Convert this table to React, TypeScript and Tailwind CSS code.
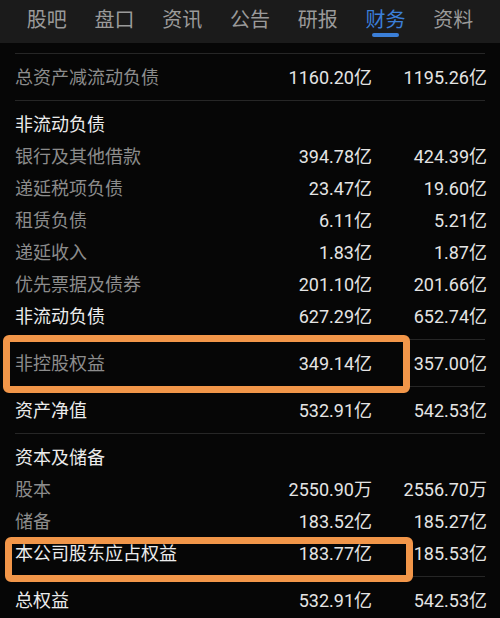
// Stock finance tab — balance sheet excerpt with two highlighted rows.
const tabs = ['股吧', '盘口', '资讯', '公告', '研报', '财务', '资料'];

type Row = { label: string; a?: string; b?: string; strong?: boolean };

const sections: Row[][] = [
  [{ label: '总资产减流动负债', a: '1160.20亿', b: '1195.26亿' }],
  [
    { label: '非流动负债', strong: true },
    { label: '银行及其他借款', a: '394.78亿', b: '424.39亿' },
    { label: '递延税项负债', a: '23.47亿', b: '19.60亿' },
    { label: '租赁负债', a: '6.11亿', b: '5.21亿' },
    { label: '递延收入', a: '1.83亿', b: '1.87亿' },
    { label: '优先票据及债券', a: '201.10亿', b: '201.66亿' },
    { label: '非流动负债', a: '627.29亿', b: '652.74亿', strong: true },
  ],
  [{ label: '非控股权益', a: '349.14亿', b: '357.00亿' }],
  [{ label: '资产净值', a: '532.91亿', b: '542.53亿', strong: true }],
  [
    { label: '资本及储备', strong: true },
    { label: '股本', a: '2550.90万', b: '2556.70万' },
    { label: '储备', a: '183.52亿', b: '185.27亿' },
    { label: '本公司股东应占权益', a: '183.77亿', b: '185.53亿', strong: true },
  ],
  [{ label: '总权益', a: '532.91亿', b: '542.53亿', strong: true }],
];

function DataRow({ row }: { row: Row }) {
  return (
    <div className="flex h-8 items-center pl-[15px] pr-[13px] text-[18px]">
      <span className={`flex-1 ${row.strong ? 'text-[#ececec]' : 'text-[#8c8c8c]'}`}>{row.label}</span>
      <span className="text-right text-[#e4e4e4]">{row.a}</span>
      <span className="w-[115px] text-right text-[#e4e4e4]">{row.b}</span>
    </div>
  );
}

export default function App() {
  return (
    <div
      className="relative h-[618px] w-[500px] overflow-hidden bg-[#060606]"
      style={{ fontFamily: "Roboto, 'Noto Sans CJK SC', sans-serif" }}
    >
      {/* tab bar */}
      <div className="flex h-[43px] bg-[#1b1b1b] px-[13px]">
        {tabs.map((t) => {
          const active = t === '财务';
          return (
            <div key={t} className="relative flex w-[68px] justify-center pt-[6px]">
              <span className={`text-[20px] leading-[28px] ${active ? 'text-[#3b7fd8]' : 'text-[#9a9a9a]'}`}>{t}</span>
              {active && <span className="absolute left-[20px] top-[33px] h-[4px] w-[27px] rounded-full bg-[#3b7fd8]" />}
            </div>
          );
        })}
      </div>

      <div className="pt-[10px]">
        {sections.map((rows, i) => (
          <div key={i} className="mx-[15px] border-t border-[#262626] first:mt-0">
            <div className="-mx-[15px] py-[7px]">
              {rows.map((r, j) => (
                <DataRow key={j} row={r} />
              ))}
            </div>
          </div>
        ))}
      </div>

      {/* annotation boxes */}
      <div className="pointer-events-none absolute left-[3px] top-[335px] h-[58px] w-[407px] rounded-[6px] border-[7px] border-[#f29649]" />
      <div className="pointer-events-none absolute left-[5px] top-[537px] h-[45px] w-[408px] rounded-[6px] border-[7px] border-[#f29649]" />
    </div>
  );
}
